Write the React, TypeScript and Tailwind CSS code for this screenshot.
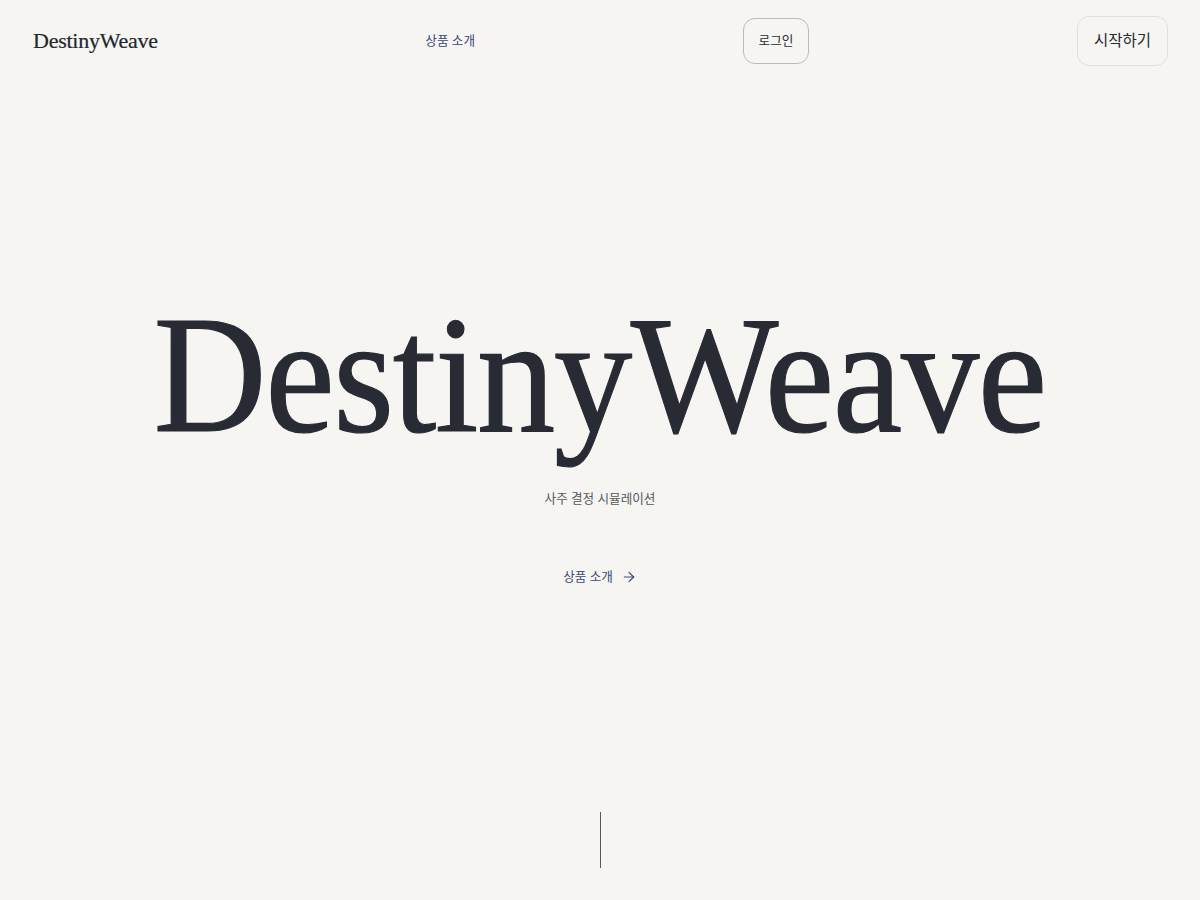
import { ArrowRight } from 'lucide-react'

const serif = { fontFamily: '"Liberation Serif", "Noto Serif", serif' }

export default function App() {
  return (
    <div className="flex h-[900px] flex-col overflow-hidden bg-[#f6f5f2] font-['Noto_Sans','Noto_Sans_CJK_KR',sans-serif] text-[#272a31]">
      <header className="flex h-[82px] items-center justify-between pr-8 pl-[33px]">
        <a href="#" className="font-['Liberation_Serif',serif] text-[22px] leading-none tracking-[-0.25px] text-[#23262d] [-webkit-text-stroke:0.2px]">
          DestinyWeave
        </a>
        <a href="#about" className="text-[12.6px] text-[#3e4a78]">
          상품 소개
        </a>
        <button className="h-[46px] rounded-xl border border-[#b9b9b9] px-[15px] text-[12.6px] text-[#272a31]">로그인</button>
        <button className="h-[50px] rounded-xl border border-[#e2e0dc] px-4 text-[15.5px] text-[#272a31]">시작하기</button>
      </header>

      <main className="flex flex-1 flex-col items-center">
        <h1
          style={serif}
          className="mt-[208px] scale-x-[0.932] text-[168px] leading-none tracking-[-1.5px] whitespace-nowrap text-[#282b33] [-webkit-text-stroke:1.2px]"
        >
          DestinyWeave
        </h1>
        <p className="mt-[32px] text-[12.6px] text-[#555860]">사주 결정 시뮬레이션</p>
        <a href="#about" className="mt-[59px] flex items-center gap-2 text-[12.6px] text-[#3e4a78]">
          상품 소개
          <ArrowRight className="h-4 w-4" strokeWidth={1.75} />
        </a>
        <div className="mt-auto mb-[32px] h-[56px] w-px bg-[#55575c]" />
      </main>
    </div>
  )
}
